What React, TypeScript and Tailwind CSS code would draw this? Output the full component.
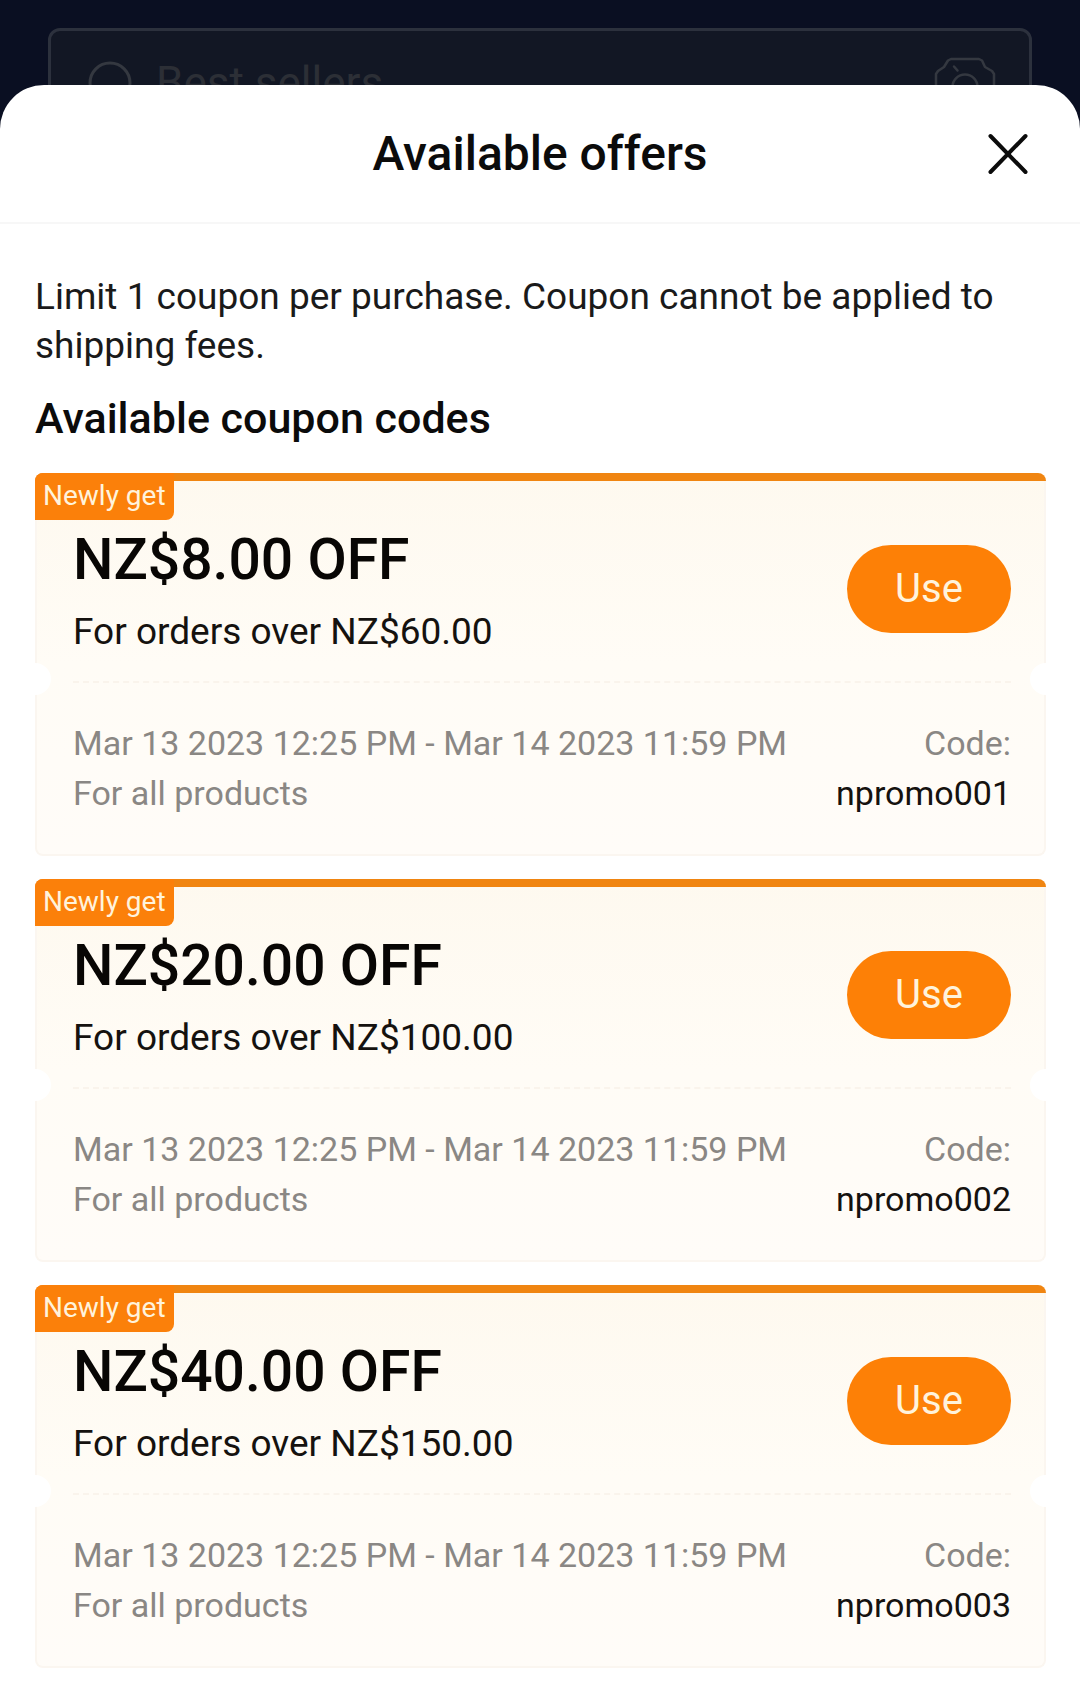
type Coupon = {
  amount: string;
  minimum: string;
  code: string;
};

const coupons: Coupon[] = [
  { amount: "NZ$8.00 OFF", minimum: "For orders over NZ$60.00", code: "npromo001" },
  { amount: "NZ$20.00 OFF", minimum: "For orders over NZ$100.00", code: "npromo002" },
  { amount: "NZ$40.00 OFF", minimum: "For orders over NZ$150.00", code: "npromo003" },
];

function SearchIcon() {
  return (
    <svg aria-hidden="true" className="size-[52px] shrink-0" viewBox="0 0 52 52" fill="none" stroke="currentColor" strokeWidth="3" strokeLinecap="round">
      <circle cx="24" cy="26" r="20" />
      <path d="M38 41l9 9" />
    </svg>
  );
}

function CameraIcon() {
  return (
    <svg aria-hidden="true" className="h-[52px] w-[62px]" viewBox="0 0 62 52" fill="none" stroke="currentColor" strokeWidth="2.5" strokeLinejoin="round" strokeLinecap="round">
      <path d="M17 2h28l3 1.500 3 6.500 7 4 2 3v29l-3 4H5l-3-4V17l2-3 6-4 4-6.500z" />
      <circle cx="31" cy="30" r="12.500" />
      <path d="M20 9.500l3.500 4" />
    </svg>
  );
}

function CloseIcon() {
  return (
    <svg aria-hidden="true" className="size-[44px]" viewBox="0 0 44 44" fill="none" stroke="currentColor" strokeWidth="4" strokeLinecap="round">
      <path d="M4.500 4l35 36M39.500 4l-35 36" />
    </svg>
  );
}

function CouponCard({ coupon }: { coupon: Coupon }) {
  return (
    <li className="relative rounded-lg border-2 border-t-0 border-[#fbf6f0] bg-linear-to-b from-[#fef9ef] via-[#fffcf6] via-50% to-[#fffcf8]">
      <div className="-mx-[2px] h-2 rounded-t-lg bg-[#f08511]" />
      <span className="absolute -left-[2px] top-0 flex h-[47px] items-center rounded-tl-lg rounded-br-lg bg-[#fb800a] px-2 pb-[2px] text-[28px] leading-8 text-[#fff3dc]">
        Newly get
      </span>
      <div className="flex h-[200px] items-center justify-between pr-[33px] pl-9 pt-4">
        <div className="pt-1">
          <h3 className="text-[57px] leading-[70px] font-medium text-[#080604]">{coupon.amount}</h3>
          <p className="mt-3 text-[37px] leading-[50px] text-[#15120f]">{coupon.minimum}</p>
        </div>
        <button
          type="button"
          aria-label={`Use ${coupon.code}`}
          className="h-[88px] w-[164px] rounded-full bg-[#fd8006] text-[40px] text-[#fff3dc]"
        >
          Use
        </button>
      </div>
      <div className="mr-[33px] ml-9 border-t-2 border-dashed border-[#faf4ec]" />
      <span className="absolute -left-[18px] top-[190px] size-8 rounded-full bg-white" />
      <span className="absolute -right-[18px] top-[190px] size-8 rounded-full bg-white" />
      <div className="flex justify-between pr-[33px] pl-9 pt-[35px] pb-9 text-[34px] leading-[50px] text-[#8a8784]">
        <div>
          <p>Mar 13 2023 12:25 PM - Mar 14 2023 11:59 PM</p>
          <p>For all products</p>
        </div>
        <div className="text-right">
          <p>Code:</p>
          <p className="text-[#15120f]">{coupon.code}</p>
        </div>
      </div>
    </li>
  );
}

export default function App() {
  return (
    <div className="flex min-h-screen flex-col bg-[#0a0f22] font-[Roboto,sans-serif]">
      <header className="px-12 pt-7">
        <div className="flex h-[109px] items-center rounded-xl border-[3px] border-[#2c313d] bg-[#121724] pr-[33px] pl-[35px] text-[#343840]">
          <SearchIcon />
          <input
            type="search"
            aria-label="Search products"
            placeholder="Best sellers"
            className="ml-[18px] min-w-0 flex-1 bg-transparent text-[44px] outline-none placeholder:text-[#2c2f36]"
          />
          <button type="button" aria-label="Search by image">
            <CameraIcon />
          </button>
        </div>
      </header>
      <main className="relative -mt-[52px] flex-1 rounded-t-[44px] bg-white">
        <div className="grid h-[139px] grid-cols-[1fr_auto_1fr] items-center border-b-2 border-[#f7f7f7] px-[50px]">
          <h1 className="col-start-2 text-[48px] leading-[56px] font-medium text-[#0b0b0b]">Available offers</h1>
          <button type="button" aria-label="Close" className="justify-self-end text-[#0b0b0b]">
            <CloseIcon />
          </button>
        </div>
        <div className="pt-12 pr-[34px] pb-8 pl-[35px]">
          <p className="text-[37px] leading-[49px] text-[#1a1a1a]">
            Limit 1 coupon per purchase. Coupon cannot be applied to shipping fees.
          </p>
          <h2 className="mt-5 text-[43px] leading-[56px] font-medium text-[#0b0b0b]">Available coupon codes</h2>
          <ul className="mt-[27px] flex flex-col gap-[23px]">
            {coupons.map((coupon) => (
              <CouponCard key={coupon.code} coupon={coupon} />
            ))}
          </ul>
        </div>
      </main>
    </div>
  );
}
